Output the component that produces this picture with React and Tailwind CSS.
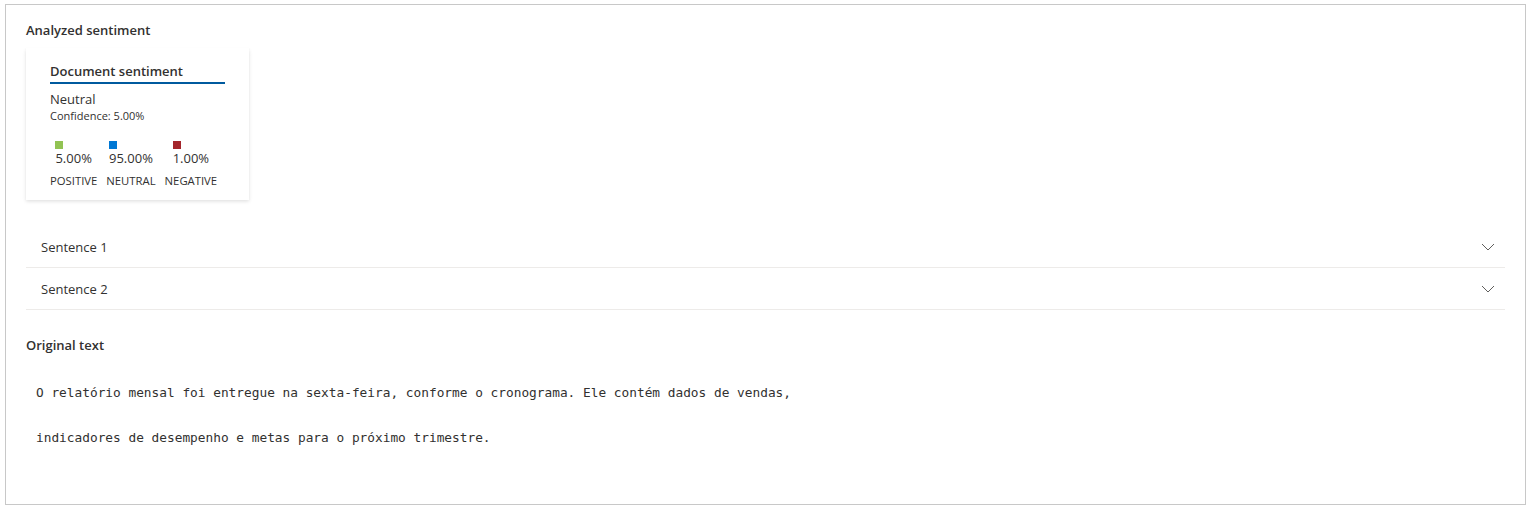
import React from 'react';

const scores = [
  { label: 'POSITIVE', value: '5.00%', color: 'bg-[#92c353]' },
  { label: 'NEUTRAL', value: '95.00%', color: 'bg-[#0078d4]' },
  { label: 'NEGATIVE', value: '1.00%', color: 'bg-[#a4262c]' },
];

const sentences = ['Sentence 1', 'Sentence 2'];

const Chevron = () => (
  <svg width="14" height="8" viewBox="0 0 14 8" fill="none" className="text-[#605e5c]">
    <path d="M1 1l6 6 6-6" stroke="currentColor" strokeWidth="1" />
  </svg>
);

const App = () => {
  return (
    <div className="bg-white w-[1530px] h-[509px] pt-[4px] pl-[5px] font-['Open_Sans',sans-serif] text-[#323130]">
      <div className="w-[1521px] h-[501px] border border-[#c8c8c8] px-[20px] pt-[15px]">
        {/* Analyzed sentiment */}
        <h3 className="text-[13px] font-semibold leading-[20px]">Analyzed sentiment</h3>

        <div className="mt-[8px] w-[223px] h-[152px] bg-white shadow-[0_1.6px_3.6px_rgba(0,0,0,0.13),0_0.3px_0.9px_rgba(0,0,0,0.11)] px-[24px] pt-[13px]">
          <div className="border-b-2 border-[#005a9e] pb-[1px] text-[13px] font-semibold leading-[20px]">
            Document sentiment
          </div>
          <div className="mt-[6px] text-[13px] leading-[18px]">Neutral</div>
          <div className="text-[11px] leading-[16px]">Confidence: 5.00%</div>

          <div className="mt-[17px] flex gap-[9px]">
            {scores.map((s) => (
              <div key={s.label} className="flex flex-col items-center">
                <div className="flex flex-col items-start">
                  <span className={`w-[8px] h-[8px] ${s.color}`} />
                  <span className="text-[13px] leading-[18px]">{s.value}</span>
                </div>
                <span className="mt-[7px] text-[11.3px] leading-[14px]">{s.label}</span>
              </div>
            ))}
          </div>
        </div>

        {/* Sentences */}
        <div className="mt-[26px]">
          {sentences.map((s) => (
            <div
              key={s}
              className="h-[42px] flex items-center justify-between border-b border-[#edebe9] pl-[15px] pr-[10px]"
            >
              <span className="text-[13px] leading-[20px]">{s}</span>
              <Chevron />
            </div>
          ))}
        </div>

        {/* Original text */}
        <h3 className="mt-[25px] text-[13px] font-semibold leading-[20px]">Original text</h3>
        <div className="mt-[27px] pl-[10px] font-['DejaVu_Sans_Mono',monospace] text-[12.8px] leading-[22px] text-[#323130]">
          <p>O relatório mensal foi entregue na sexta-feira, conforme o cronograma. Ele contém dados de vendas,</p>
          <p className="mt-[23px]">indicadores de desempenho e metas para o próximo trimestre.</p>
        </div>
      </div>
    </div>
  );
};

export default App;
